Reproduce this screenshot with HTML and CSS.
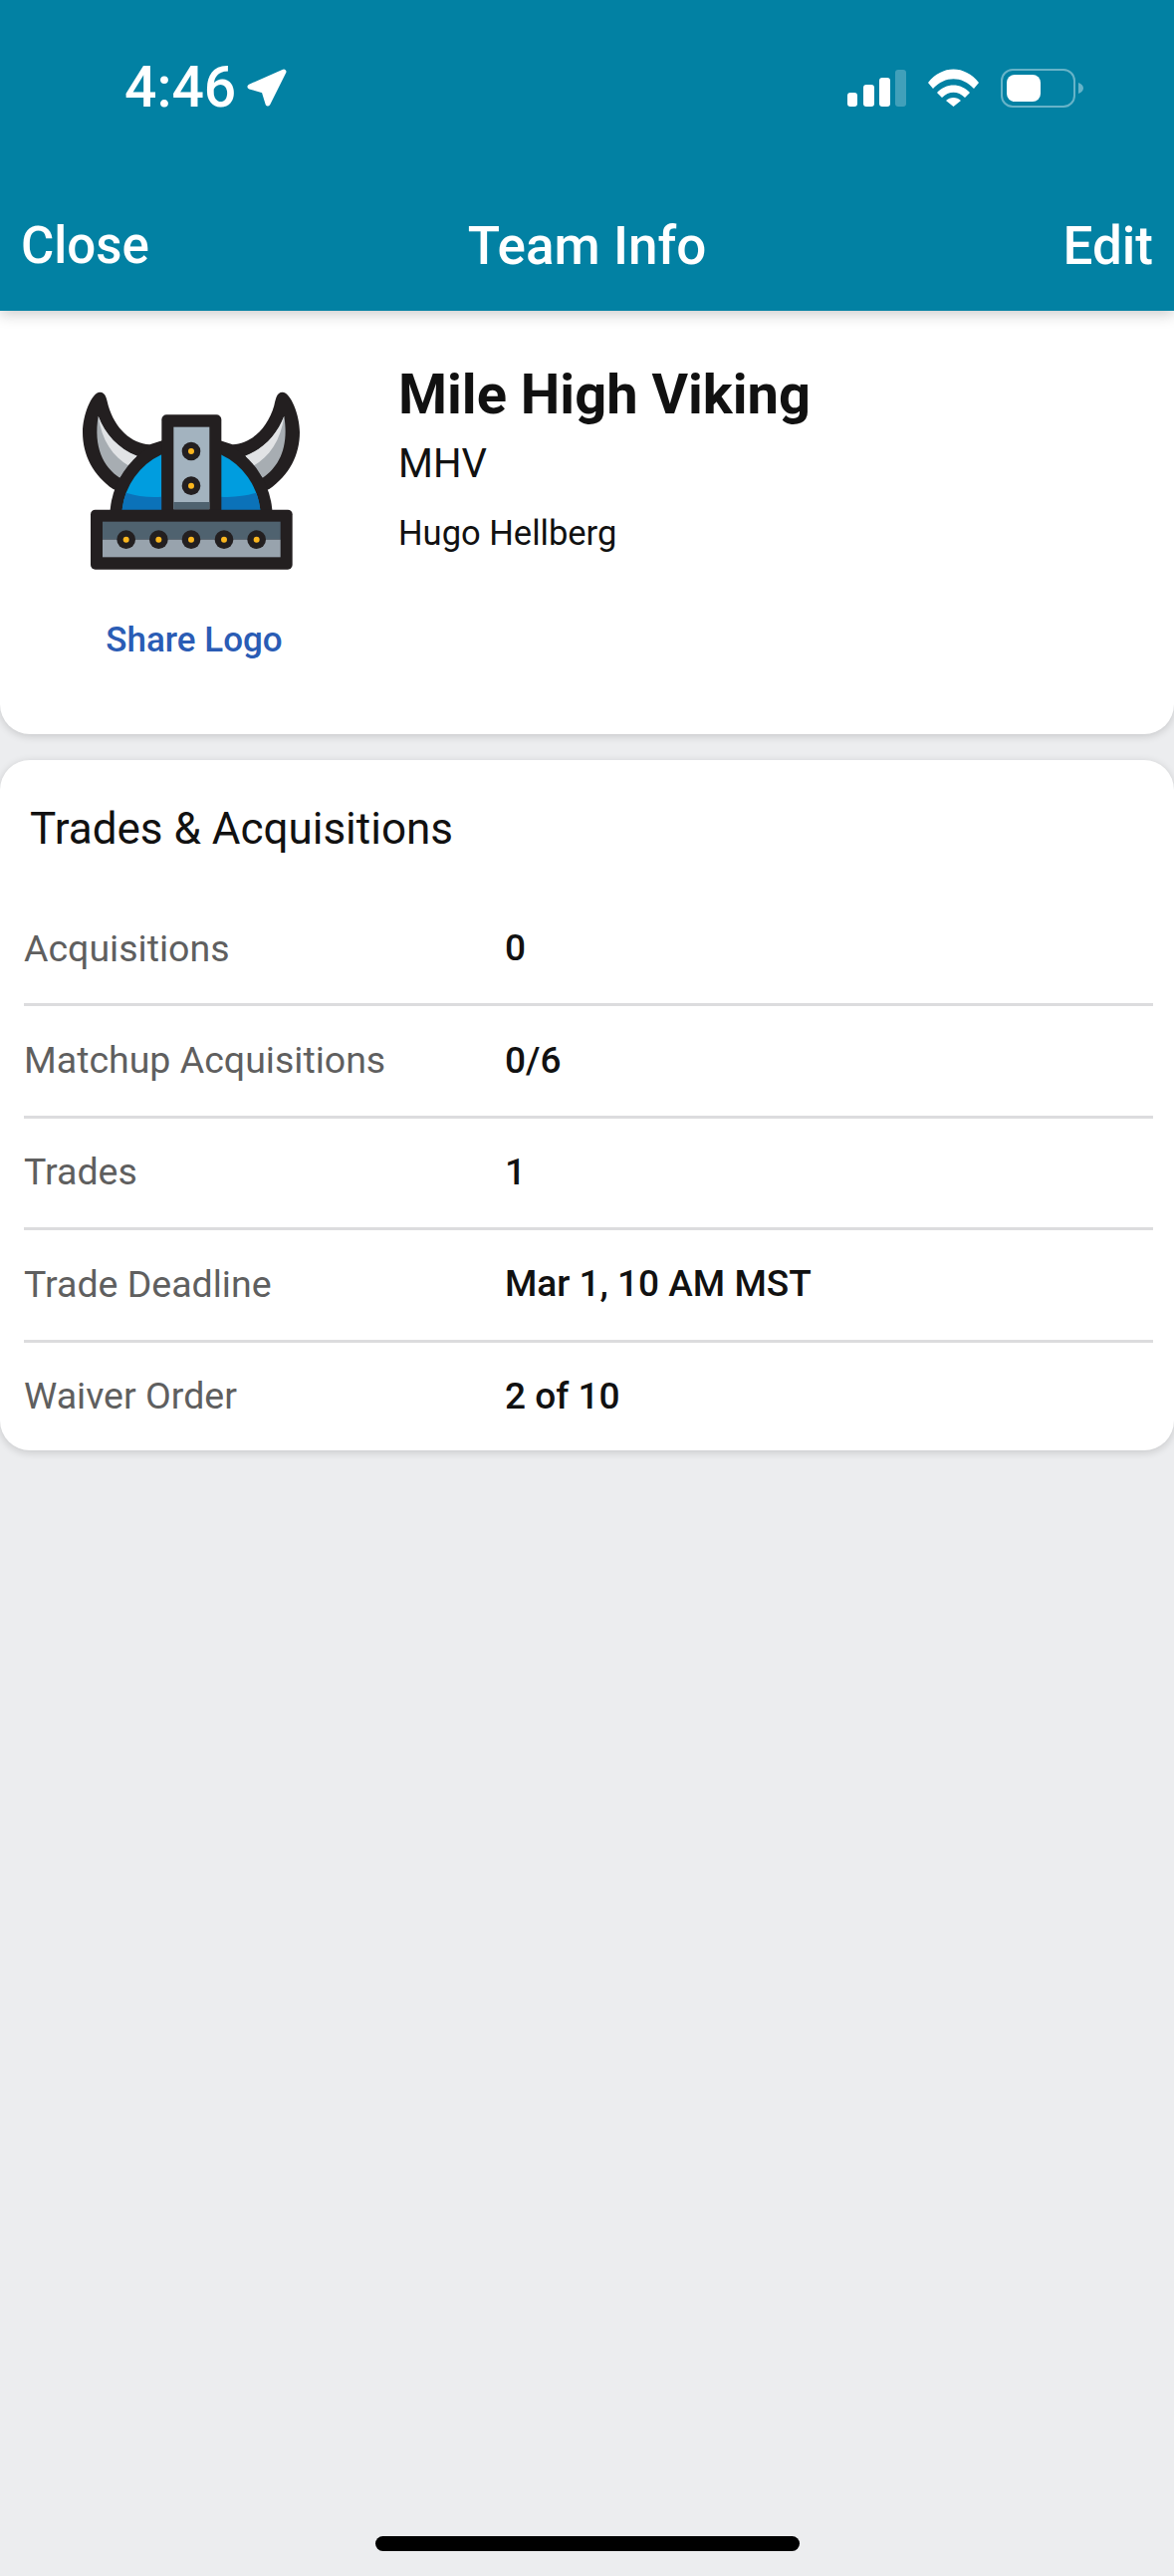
FILE: index.html
```html
<!DOCTYPE html>
<html>
  <head>
    <meta charset="utf-8">
    <title>Team Info</title>
    <link rel="stylesheet" href="styles.css">
  </head>
  <body class="body">

    <header class="Header">
      <div class="StatusBar">
        <div class="StatusBar-left">
          <span class="StatusBar-time">4:46</span>
          <svg class="StatusBar-arrow" width="40" height="38" viewBox="0 0 40 38">
            <path fill="#fff" stroke="#fff" stroke-width="5" stroke-linejoin="round" d="M3 18 L37 3 L21 35 L17 22 Z"/>
          </svg>
        </div>
        <div class="StatusBar-right">
          <svg width="59" height="37" viewBox="0 0 59 37">
            <rect x="0" y="23" width="10" height="14" rx="3" fill="#fff"/>
            <rect x="16" y="15" width="11" height="22" rx="3" fill="#fff"/>
            <rect x="32" y="8" width="11" height="29" rx="3" fill="#fff"/>
            <rect x="48" y="0" width="11" height="37" rx="3" fill="#fff" opacity="0.25"/>
          </svg>
          <svg width="51" height="38" viewBox="0 0 51 38">
            <path fill="#fff" d="M0 14 C14 -4 37 -4 51 14 L46 20 C34 7 17 7 5 20 Z"/>
            <path fill="#fff" d="M9 24 C18 14 33 14 42 24 L37 29 C30 22 21 22 14 29 Z"/>
            <path fill="#fff" d="M18 32 C22 28 29 28 33 32 L25.500 38 Z"/>
          </svg>
          <svg width="83" height="39" viewBox="0 0 83 39">
            <rect x="1" y="1" width="73" height="37" rx="11" fill="none" stroke="#fff" stroke-opacity="0.4" stroke-width="2"/>
            <rect x="6" y="6" width="34" height="27" rx="8" fill="#fff"/>
            <path d="M78 14 C81 15 83 17 83 19.500 C83 22 81 24 78 25 Z" fill="#fff" opacity="0.4"/>
          </svg>
        </div>
      </div>
      <nav class="NavBar">
        <a class="NavBar-link" href="#">Close</a>
        <span class="NavBar-title">Team Info</span>
        <a class="NavBar-link NavBar-link--right" href="#">Edit</a>
      </nav>
    </header>

    <section class="Card TeamCard">
      <div class="TeamCard-logo">
        <svg width="220" height="182" viewBox="95 95 660 546">
          <!-- horns -->
          <g>
            <path fill="#231f20" d="M150 100 C168 100 170 120 175 140 C195 210 245 255 300 258 L340 245 L260 420 L190 392 C130 350 98 290 98 220 C98 170 125 100 150 100 Z"/>
            <path fill="#a7adb2" d="M145 172 C165 225 205 270 262 292 L210 358 C160 325 130 265 145 172 Z"/>
            <path fill="#e1e3e5" d="M145 172 C165 225 205 270 262 292 L238 322 C190 295 155 245 145 172 Z"/>
          </g>
          <g transform="matrix(-1 0 0 1 850 0)">
            <path fill="#231f20" d="M150 100 C168 100 170 120 175 140 C195 210 245 255 300 258 L340 245 L260 420 L190 392 C130 350 98 290 98 220 C98 170 125 100 150 100 Z"/>
            <path fill="#a7adb2" d="M145 172 C165 225 205 270 262 292 L210 358 C160 325 130 265 145 172 Z"/>
            <path fill="#e1e3e5" d="M145 172 C165 225 205 270 262 292 L238 322 C190 295 155 245 145 172 Z"/>
          </g>
          <!-- dome -->
          <path fill="#231f20" d="M180 476 A245 245 0 0 1 670 476 Z"/>
          <path fill="#009ddf" d="M217 456 A208 208 0 0 1 336 288 L336 456 Z"/>
          <path fill="#009ddf" d="M633 456 A208 208 0 0 0 514 288 L514 456 Z"/>
          <path fill="#0b72b9" d="M217 456 C219 435 223 420 229 403 C260 413 300 418 336 415 L336 456 Z"/>
          <path fill="#0b72b9" d="M633 456 C631 435 627 420 621 403 C590 413 550 418 514 415 L514 456 Z"/>
          <!-- centre strip -->
          <rect x="336" y="168" width="180" height="300" rx="15" fill="#231f20"/>
          <rect x="372" y="205" width="108" height="248" fill="#a3b3bf"/>
          <rect x="372" y="431" width="108" height="22" fill="#4f626f"/>
          <circle cx="425" cy="278" r="28" fill="#231f20"/>
          <circle cx="425" cy="278" r="9" fill="#fbb61e"/>
          <circle cx="425" cy="382" r="28" fill="#231f20"/>
          <circle cx="425" cy="382" r="9" fill="#fbb61e"/>
          <!-- brim -->
          <rect x="122" y="454" width="608" height="180" rx="14" fill="#231f20"/>
          <rect x="158" y="490" width="536" height="54" fill="#4f626f"/>
          <rect x="158" y="544" width="536" height="53" fill="#98a3ad"/>
          <circle cx="229" cy="544" r="28" fill="#231f20"/>
          <circle cx="229" cy="544" r="9" fill="#fbb61e"/>
          <circle cx="327" cy="544" r="28" fill="#231f20"/>
          <circle cx="327" cy="544" r="9" fill="#fbb61e"/>
          <circle cx="425" cy="544" r="28" fill="#231f20"/>
          <circle cx="425" cy="544" r="9" fill="#fbb61e"/>
          <circle cx="524" cy="544" r="28" fill="#231f20"/>
          <circle cx="524" cy="544" r="9" fill="#fbb61e"/>
          <circle cx="622" cy="544" r="28" fill="#231f20"/>
          <circle cx="622" cy="544" r="9" fill="#fbb61e"/>
        </svg>
        <a class="TeamCard-share" href="#">Share Logo</a>
      </div>
      <div class="TeamCard-info">
        <h1 class="TeamCard-name">Mile High Viking</h1>
        <div class="TeamCard-abbr">MHV</div>
        <div class="TeamCard-owner">Hugo Hellberg</div>
      </div>
    </section>

    <section class="Card StatsCard">
      <h2 class="StatsCard-title">Trades &amp; Acquisitions</h2>
      <div class="StatsRow">
        <span class="StatsRow-label">Acquisitions</span>
        <span class="StatsRow-value">0</span>
      </div>
      <div class="StatsRow">
        <span class="StatsRow-label">Matchup Acquisitions</span>
        <span class="StatsRow-value">0/6</span>
      </div>
      <div class="StatsRow">
        <span class="StatsRow-label">Trades</span>
        <span class="StatsRow-value">1</span>
      </div>
      <div class="StatsRow">
        <span class="StatsRow-label">Trade Deadline</span>
        <span class="StatsRow-value">Mar 1, 10 AM MST</span>
      </div>
      <div class="StatsRow">
        <span class="StatsRow-label">Waiver Order</span>
        <span class="StatsRow-value">2 of 10</span>
      </div>
    </section>

    <div class="HomeBar"></div>
  </body>
</html>
```

FILE: styles.css
```css
html, body {
  padding: 0;
  margin: 0;
  font-family: Roboto, Arial, sans-serif;
}
.body {
  display: flex;
  flex-direction: column;
  width: 1179px;
  height: 2586px;
  overflow: hidden;
  background-color: #ecedef;
  color: #111;
}
a {
  text-decoration: none;
}

.Header {
  position: relative;
  z-index: 2;
  height: 312px;
  box-sizing: border-box;
  background-color: #0281a3;
  box-shadow: 0 3px 14px rgba(0, 0, 0, 0.22);
  color: white;
}

.StatusBar {
  display: flex;
  justify-content: space-between;
  align-items: center;
  height: 38px;
  padding: 69px 91px 0 125px;
}
.StatusBar-left {
  display: flex;
  align-items: center;
  gap: 11px;
}
.StatusBar-time {
  font-size: 57px;
  font-weight: 500;
  line-height: 38px;
}
.StatusBar-right {
  display: flex;
  align-items: center;
  gap: 22px;
}

.NavBar {
  display: grid;
  grid-template-columns: 1fr auto 1fr;
  align-items: center;
  padding: 110px 21px 0;
}
.NavBar-link, .NavBar-title {
  color: white;
  font-size: 51px;
  font-weight: 500;
  line-height: 60px;
}
.NavBar-title {
  font-size: 53px;
}
.NavBar-link--right {
  justify-self: end;
  font-size: 53px;
}

.Card {
  background-color: white;
  border-radius: 30px;
  box-shadow: 0 2px 8px rgba(0, 0, 0, 0.16);
}

.TeamCard {
  display: flex;
  height: 425px;
  box-sizing: border-box;
  border-radius: 0 0 30px 30px;
  padding: 80px 0 0 79px;
}
.TeamCard-logo {
  display: flex;
  flex-direction: column;
  align-items: center;
  width: 226px;
}
.TeamCard-share {
  margin: 49px 0 0 6px;
  color: #2a5cb5;
  font-size: 35px;
  font-weight: 500;
  line-height: 40px;
}
.TeamCard-info {
  margin-left: 95px;
  margin-top: -29px;
}
.TeamCard-name {
  margin: 0;
  font-size: 56px;
  font-weight: 700;
  line-height: 66px;
}
.TeamCard-abbr {
  margin-top: 13px;
  font-size: 40px;
  line-height: 48px;
}
.TeamCard-owner {
  margin-top: 25px;
  font-size: 34.500px;
  line-height: 40px;
}

.StatsCard {
  margin-top: 26px;
  padding: 0 21px 0 24px;
  height: 693px;
  box-sizing: border-box;
}
.StatsCard-title {
  margin: 0;
  padding: 42px 0 0 6px;
  height: 135px;
  box-sizing: border-box;
  font-size: 44px;
  font-weight: 400;
  line-height: 54px;
}
.StatsRow {
  display: flex;
  align-items: center;
  height: 112.400px;
  box-sizing: border-box;
  padding-bottom: 2px;
  border-bottom: 3px solid #dcdcde;
}
.StatsRow:last-child {
  padding-bottom: 5px;
  border-bottom: none;
}
.StatsRow-label {
  width: 483px;
  color: #5f5f5f;
  font-size: 37.500px;
}
.StatsRow-value {
  color: #111;
  font-size: 37px;
  font-weight: 500;
}

.HomeBar {
  width: 426px;
  height: 15px;
  margin: auto auto 25px;
  border-radius: 8px;
  background-color: black;
}
```
